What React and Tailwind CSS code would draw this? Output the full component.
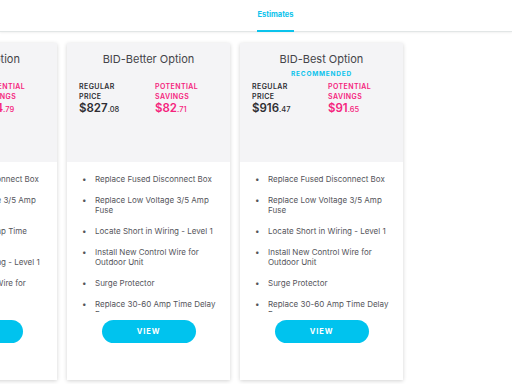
const options = [
  {
    title: 'BID-Good Option',
    recommended: false,
    regular: ['$743', '.29'],
    savings: ['$74', '.79'],
    items: [
      'Replace Fused Disconnect Box',
      'Replace Low Voltage 3/5 Amp Fuse',
      'Replace 100-200 Amp Time Delay Fuse',
      'Locate Short in Wiring - Level 1',
      'Install New Control Wire for Outdoor Unit',
    ],
  },
  {
    title: 'BID-Better Option',
    recommended: false,
    regular: ['$827', '.08'],
    savings: ['$82', '.71'],
    items: [
      'Replace Fused Disconnect Box',
      'Replace Low Voltage 3/5 Amp Fuse',
      'Locate Short in Wiring - Level 1',
      'Install New Control Wire for Outdoor Unit',
      'Surge Protector',
      'Replace 30-60 Amp Time Delay Fuse',
    ],
  },
  {
    title: 'BID-Best Option',
    recommended: true,
    regular: ['$916', '.47'],
    savings: ['$91', '.65'],
    items: [
      'Replace Fused Disconnect Box',
      'Replace Low Voltage 3/5 Amp Fuse',
      'Locate Short in Wiring - Level 1',
      'Install New Control Wire for Outdoor Unit',
      'Surge Protector',
      'Replace 30-60 Amp Time Delay Fuse',
    ],
  },
];

const Price = ({ label, value, pink }) => (
  <div className={pink ? 'text-[#f5237d]' : 'text-[#2e2e33]'}>
    <p className="text-[7px] font-semibold tracking-[0.06em] leading-[10px] uppercase w-[44px] pt-[1px]">
      {label}
    </p>
    <p className="text-[11.5px] font-semibold leading-[12px]">
      {value[0]}
      <span className="text-[7.5px] font-medium">{value[1]}</span>
    </p>
  </div>
);

const OptionCard = ({ option }) => (
  <div className="w-[163px] h-[337px] shrink-0 bg-white shadow-[0_1px_4px_rgba(0,0,0,0.18)] flex flex-col">
    <div className="h-[119px] bg-[#f4f4f6] pt-[10px] px-[12px]">
      <h2 className="text-center text-[11px] leading-[13px] text-[#444449]">{option.title}</h2>
      <p className="h-[15px] pt-[3px] text-center text-[6.5px] font-bold tracking-[0.12em] text-[#0bc3ec] leading-[10px]">
        {option.recommended ? 'RECOMMENDED' : ''}
      </p>
      <div className="grid grid-cols-2 gap-[13px]">
        <Price label="Regular Price" value={option.regular} />
        <Price label="Potential Savings" value={option.savings} pink />
      </div>
    </div>
    <div className="h-[150px] overflow-hidden pt-[12px] pl-[15px] pr-[10px]">
      <ul className="flex flex-col gap-[11px]">
        {option.items.map((item, i) => (
          <li key={i} className="flex text-[8px] leading-[10px] text-[#55555b]">
            <span className="w-[13px] shrink-0">•</span>
            <span>{item}</span>
          </li>
        ))}
      </ul>
    </div>
    <div className="flex justify-center pt-[8px]">
      <button className="w-[94px] h-[23px] rounded-full bg-[#00c3ee] text-white text-[7.5px] font-bold tracking-[0.12em]">
        VIEW
      </button>
    </div>
  </div>
);

export default function App() {
  return (
    <div className="w-[512px] h-[384px] overflow-hidden bg-white font-['Inter',sans-serif]">
      <header className="h-[32px] bg-white border-b border-[#e2e6e6] shadow-[0_1px_2px_rgba(0,0,0,0.06)] flex">
        <div className="ml-[257px] w-[37px] flex flex-col">
          <span className="flex-1 flex items-center justify-center text-[7.5px] font-bold text-[#0bc3ec]">
            Estimates
          </span>
          <span className="h-[2px] bg-[#0bc3ec] -mb-[1px]" />
        </div>
      </header>
      <main className="flex gap-[10px] ml-[-106px] mt-[11px]">
        {options.map((option, i) => (
          <OptionCard key={i} option={option} />
        ))}
      </main>
    </div>
  );
}
